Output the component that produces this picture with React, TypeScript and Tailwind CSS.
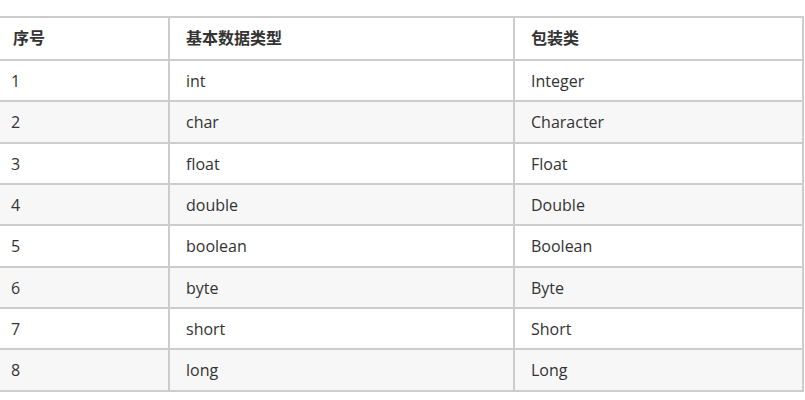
const rows: [string, string, string][] = [
  ["1", "int", "Integer"],
  ["2", "char", "Character"],
  ["3", "float", "Float"],
  ["4", "double", "Double"],
  ["5", "boolean", "Boolean"],
  ["6", "byte", "Byte"],
  ["7", "short", "Short"],
  ["8", "long", "Long"],
];

export default function App() {
  return (
    <div className="h-[400px] w-[805px] overflow-hidden bg-white pt-4 font-['Open_Sans','Noto_Sans_CJK_SC',sans-serif] text-[16px] text-[#333]">
      <table className="ml-[-2px] w-[804px] table-fixed border-collapse">
        <colgroup>
          <col className="w-[170px]" />
          <col className="w-[345px]" />
          <col className="w-[289px]" />
        </colgroup>
        <thead>
          <tr className="bg-white">
            <th className="border-2 border-[#ccc] pl-[13px] pr-[15px] pt-[8px] pb-[8px] text-left leading-[25px] font-bold">序号</th>
            <th className="border-2 border-[#ccc] pl-[16px] pr-[15px] pt-[8px] pb-[8px] text-left leading-[25px] font-bold">基本数据类型</th>
            <th className="border-2 border-[#ccc] pl-[16px] pr-[15px] pt-[8px] pb-[8px] text-left leading-[25px] font-bold">包装类</th>
          </tr>
        </thead>
        <tbody>
          {rows.map((r, i) => (
            <tr key={r[0]} className={i % 2 === 1 ? "bg-[#f7f7f7]" : "bg-white"}>
              <td className="border-2 border-[#ccc] pl-[11px] pr-[15px] pt-[8px] pb-[6px] leading-[25.33px]">{r[0]}</td>
              <td className="border-2 border-[#ccc] pl-[16px] pr-[15px] pt-[8px] pb-[6px] leading-[25.33px]">{r[1]}</td>
              <td className="border-2 border-[#ccc] pl-[16px] pr-[15px] pt-[8px] pb-[6px] leading-[25.33px]">{r[2]}</td>
            </tr>
          ))}
        </tbody>
      </table>
    </div>
  );
}
